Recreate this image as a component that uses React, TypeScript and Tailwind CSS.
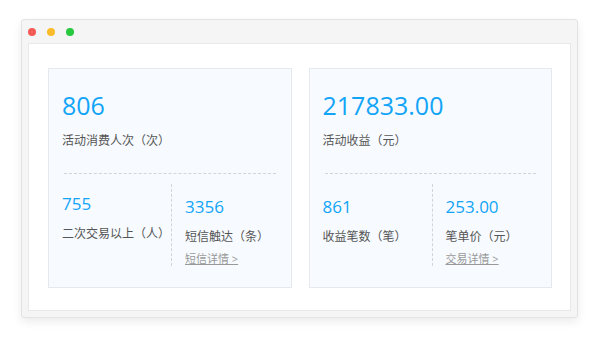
import React from 'react';

interface SubStat {
  value: string;
  label: string;
  link?: string;
}

interface StatCard {
  value: string;
  label: string;
  left: SubStat;
  right: SubStat;
}

const cards: StatCard[] = [
  {
    value: '806',
    label: '活动消费人次（次）',
    left: { value: '755', label: '二次交易以上（人）' },
    right: { value: '3356', label: '短信触达（条）', link: '短信详情 >' },
  },
  {
    value: '217833.00',
    label: '活动收益（元）',
    left: { value: '861', label: '收益笔数（笔）' },
    right: { value: '253.00', label: '笔单价（元）', link: '交易详情 >' },
  },
];

const font = { fontFamily: '"Open Sans", "Noto Sans CJK SC", sans-serif' };

const App: React.FC = () => {
  return (
    <div className="w-[600px] h-[350px] bg-white pt-[19px] pl-[21px]" style={font}>
      {/* window frame */}
      <div className="w-[557px] h-[299px] bg-[#f5f5f5] border border-[#e3e3e3] rounded-[3px] shadow-[0_4px_10px_rgba(0,0,0,0.08)] flex flex-col px-[6px] pb-[6px]">
        <div className="h-[23px] flex items-center gap-[11px] pt-[1px]">
          <span className="w-[8px] h-[8px] rounded-full bg-[#f25c55]" />
          <span className="w-[8px] h-[8px] rounded-full bg-[#fbbc2c]" />
          <span className="w-[8px] h-[8px] rounded-full bg-[#28c93f]" />
        </div>

        <div className="flex-1 bg-white border border-[#e8e8e8] flex gap-[17px] pt-[24px] pl-[19px] pr-[18px] pb-[22px]">
          {cards.map((card, i) => (
            <div key={i} className="flex-1 bg-[#f7fbff] border border-[#e6e9ec] flex flex-col pt-[21px] px-[13px]">
              <div className="text-[25px] leading-[30px] text-[#12a4f7]">{card.value}</div>
              <div className="mt-[12px] text-[12px] leading-[18px] text-[#555]">{card.label}</div>
              <div className="mt-[23px] mx-[2px] border-t border-dashed border-[#cfd5db]" />

              <div className="mt-[10px] flex items-stretch">
                <div className={`w-[109px] whitespace-nowrap ${i === 0 ? 'pt-[9px]' : 'pt-[12px]'}`}>
                  <div className="text-[17px] leading-[22px] text-[#12a4f7]">{card.left.value}</div>
                  <div className="mt-[10px] text-[12px] leading-[18px] text-[#555]">{card.left.label}</div>
                </div>
                <div className="flex-1 whitespace-nowrap border-l border-dashed border-[#cfd5db] pl-[13px] pt-[12px]">
                  <div className="text-[17px] leading-[22px] text-[#12a4f7]">{card.right.value}</div>
                  <div className="mt-[10px] text-[12px] leading-[18px] text-[#555]">{card.right.label}</div>
                  <a className="block mt-[6px] text-[11px] leading-[14px] text-[#999] underline">{card.right.link}</a>
                </div>
              </div>
            </div>
          ))}
        </div>
      </div>
    </div>
  );
};

export default App;
